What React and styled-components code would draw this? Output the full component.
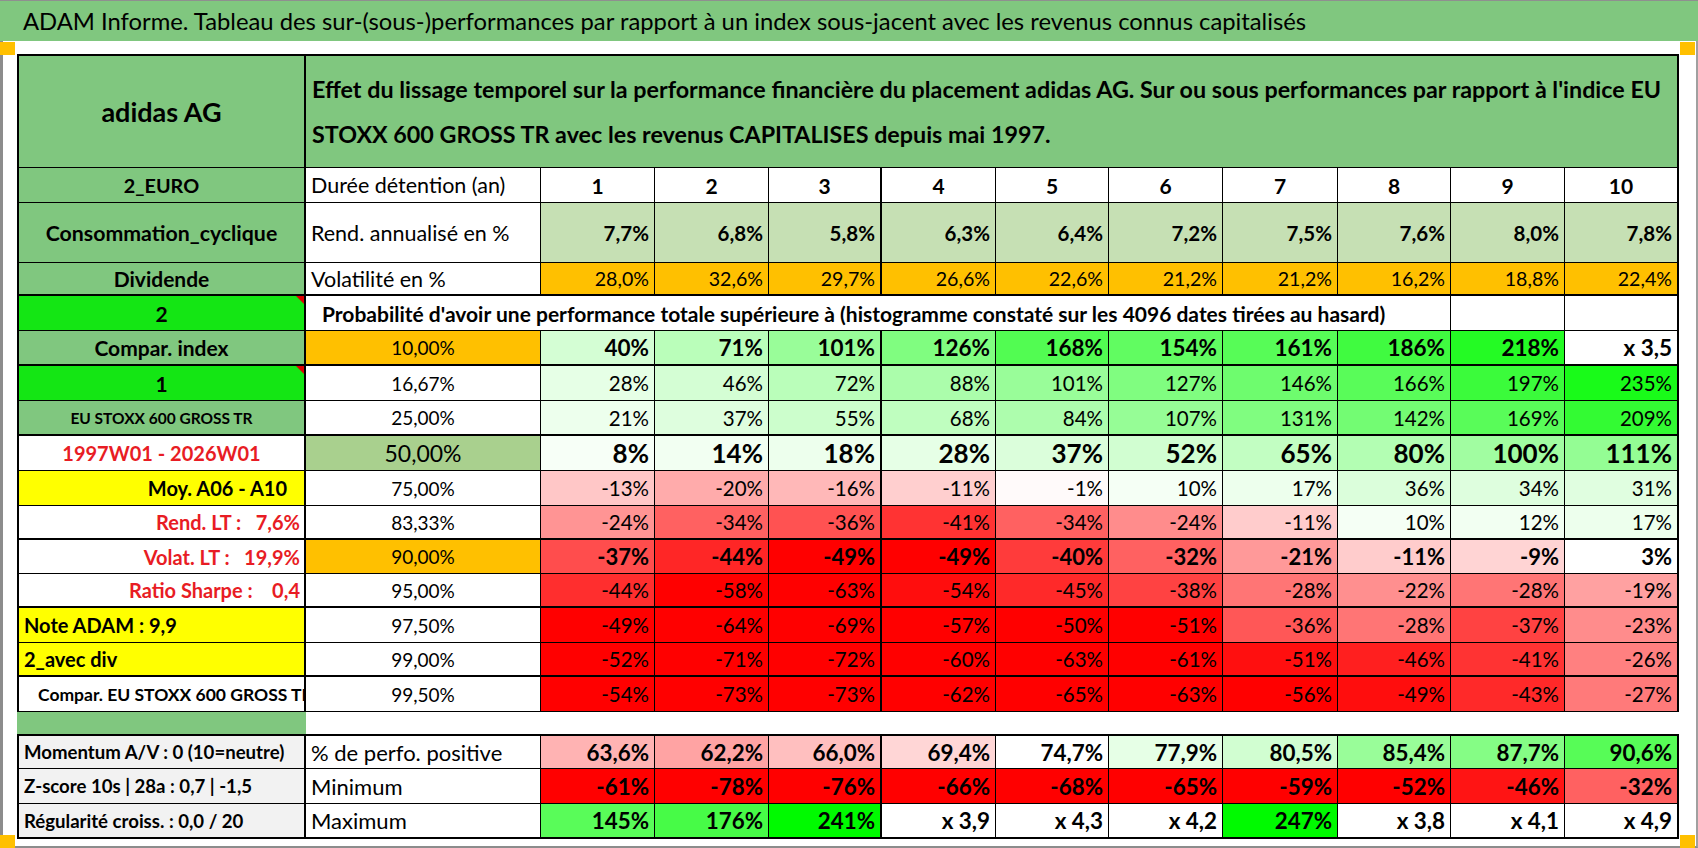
import React from 'react';
import styled, { createGlobalStyle } from 'styled-components';

const GlobalStyle = createGlobalStyle`
  html, body { margin: 0; padding: 0; background: #fff; }
  body { font-family: Lato, "Open Sans", sans-serif; color: #000; }
  * { box-sizing: border-box; }
`;

const GREEN = '#80c77f';
const LIME = '#14e614';
const ORANGE = '#ffc000';
const YELLOW = '#ffff00';
const RED_TEXT = '#e81c24';

// heat colour: t > 0 white -> green, t < 0 white -> red
function heat(t) {
  if (!t) return '#ffffff';
  const a = Math.min(Math.abs(t), 1);
  const c = Math.round(255 * (1 - a));
  if (t > 0) return `rgb(${c}, ${Math.round(255 - a * 5)}, ${c})`;
  return `rgb(255, ${c}, ${c})`;
}

const Page = styled.div`
  position: relative;
  width: 1698px;
  height: 848px;
  display: flex;
  flex-direction: column;
  border-top: 1px solid #8f8f8f;
  background: #fff;
  overflow: hidden;
`;

const TitleBar = styled.div`
  height: 40px;
  flex: none;
  display: flex;
  align-items: center;
  padding-left: 23px;
  background: ${GREEN};
  font-size: 23.8px;
  white-space: nowrap;
`;

const Frame = styled.div`
  flex: 1;
  padding: 13px 0 0 14px;
  border-left: 3px solid #8c8c8c;
  border-right: 2px solid #a0a0a0;
  border-bottom: 2px solid #8c8c8c;
`;

const Sheet = styled.div`
  display: grid;
  grid-template-columns: 289px 235px 114px 114px 113px 114px 113px 114px 115px 113px 114px 114px;
  grid-template-rows: 114px 35px 60px 33px 35px 35px 35px 35px 35px 35px 34px 34px 34px 35px 34px 35px 22px 35px 35px 35px;
`;

const Cell = styled.div`
  position: relative;
  display: flex;
  align-items: center;
  justify-content: ${({ $align }) => ($align === 'left' ? 'flex-start' : $align === 'center' ? 'center' : 'flex-end')};
  padding: ${({ $pad }) => $pad || '0 5px'};
  background: ${({ $bg }) => $bg || '#fff'};
  color: ${({ $color }) => $color || '#000'};
  font-size: ${({ $size }) => $size || 20.5}px;
  font-weight: ${({ $bold }) => ($bold ? 700 : 400)};
  white-space: ${({ $pre }) => ($pre ? 'pre' : 'nowrap')};
  overflow: hidden;
  border-style: solid;
  border-color: #000;
  border-width: ${({ $bt = 0, $br = 1, $bb = 1, $bl = 0 }) => `${$bt}px ${$br}px ${$bb}px ${$bl}px`};
  grid-column: ${({ $span }) => $span || 'auto'};
`;

const HeaderText = styled(Cell)`
  white-space: normal;
  line-height: 45px;
  font-size: 23.3px;
  font-weight: 700;
`;

const Blank = styled.div`
  background: ${({ $bg }) => $bg || '#fff'};
  grid-column: ${({ $span }) => $span || 'auto'};
`;

const CommentMark = styled.span`
  position: absolute;
  top: 0;
  right: 0;
  width: 0;
  height: 0;
  border-top: 8px solid #e00000;
  border-left: 8px solid transparent;
`;

const Handle = styled.span`
  position: absolute;
  width: 15px;
  height: 13px;
  background: #ffc000;
  ${({ $pos }) => $pos};
`;

const years = ['1', '2', '3', '4', '5', '6', '7', '8', '9', '10'];

// rows of the probability table: label cell, col B cell, values, heat levels
const rows = [
  {
    a: { text: 'Compar. index' }, b: { text: '10,00%', bg: ORANGE },
    vals: ['40%', '71%', '101%', '126%', '168%', '154%', '161%', '186%', '218%', 'x 3,5'],
    t: [0.17, 0.27, 0.4, 0.5, 0.68, 0.62, 0.66, 0.75, 0.86, 0], bold: true, size: 22.5, thick: true,
  },
  {
    a: { text: '1', bg: LIME, mark: true }, b: { text: '16,67%' },
    vals: ['28%', '46%', '72%', '88%', '101%', '127%', '146%', '166%', '197%', '235%'],
    t: [0.1, 0.17, 0.27, 0.33, 0.4, 0.5, 0.57, 0.65, 0.77, 0.9],
  },
  {
    a: { text: 'EU STOXX 600 GROSS TR', size: 15.5 }, b: { text: '25,00%' },
    vals: ['21%', '37%', '55%', '68%', '84%', '107%', '131%', '142%', '169%', '209%'],
    t: [0.07, 0.13, 0.2, 0.25, 0.32, 0.41, 0.5, 0.55, 0.65, 0.8], thick: true,
  },
  {
    a: { text: '1997W01 - 2026W01', size: 20, bg: '#fff', color: RED_TEXT }, b: { text: '50,00%', bg: '#a9d08e', size: 23 },
    vals: ['8%', '14%', '18%', '28%', '37%', '52%', '65%', '80%', '100%', '111%'],
    t: [0.03, 0.05, 0.07, 0.1, 0.14, 0.18, 0.24, 0.3, 0.37, 0.42], bold: true, size: 26,
  },
  {
    a: { text: 'Moy. A06 - A10', size: 20, bg: YELLOW, align: 'right', pad: '0 17px 0 4px' }, b: { text: '75,00%' },
    vals: ['-13%', '-20%', '-16%', '-11%', '-1%', '10%', '17%', '36%', '34%', '31%'],
    t: [-0.22, -0.33, -0.28, -0.19, -0.02, 0.04, 0.07, 0.14, 0.13, 0.12],
  },
  {
    a: { text: 'Rend. LT :   7,6%', size: 20, bg: '#fff', color: RED_TEXT, align: 'right', pad: '0 4px' }, b: { text: '83,33%' },
    vals: ['-24%', '-34%', '-36%', '-41%', '-34%', '-24%', '-11%', '10%', '12%', '17%'],
    t: [-0.42, -0.62, -0.68, -0.8, -0.62, -0.45, -0.2, 0.04, 0.05, 0.07], thick: true,
  },
  {
    a: { text: 'Volat. LT :   19,9%', size: 20, bg: '#fff', color: RED_TEXT, align: 'right', pad: '0 4px' }, b: { text: '90,00%', bg: ORANGE },
    vals: ['-37%', '-44%', '-49%', '-49%', '-40%', '-32%', '-21%', '-11%', '-9%', '3%'],
    t: [-0.7, -0.85, -1, -1, -0.77, -0.62, -0.4, -0.2, -0.17, 0], bold: true, size: 22,
  },
  {
    a: { text: 'Ratio Sharpe :    0,4', size: 20, bg: '#fff', color: RED_TEXT, align: 'right', pad: '0 4px' }, b: { text: '95,00%' },
    vals: ['-44%', '-58%', '-63%', '-54%', '-45%', '-38%', '-28%', '-22%', '-28%', '-19%'],
    t: [-0.82, -1, -1, -0.95, -0.84, -0.74, -0.54, -0.44, -0.54, -0.37], thick: true,
  },
  {
    a: { text: 'Note ADAM : 9,9', size: 20, bg: YELLOW, align: 'left' }, b: { text: '97,50%' },
    vals: ['-49%', '-64%', '-69%', '-57%', '-50%', '-51%', '-36%', '-28%', '-37%', '-23%'],
    t: [-1, -1, -1, -1, -1, -1, -0.66, -0.54, -0.74, -0.45],
  },
  {
    a: { text: '2_avec div', size: 20, bg: YELLOW, align: 'left' }, b: { text: '99,00%' },
    vals: ['-52%', '-71%', '-72%', '-60%', '-63%', '-61%', '-51%', '-46%', '-41%', '-26%'],
    t: [-1, -1, -1, -1, -1, -1, -0.94, -0.88, -0.8, -0.5], thick: true,
  },
  {
    a: { text: 'Compar. EU STOXX 600 GROSS TR', size: 17.5, bg: '#fff', align: 'left', pad: '0 0 0 19px' }, b: { text: '99,50%' },
    vals: ['-54%', '-73%', '-73%', '-62%', '-65%', '-63%', '-56%', '-49%', '-43%', '-27%'],
    t: [-1, -1, -1, -1, -1, -1, -1, -0.95, -0.84, -0.52],
  },
];

const summary = [
  {
    a: 'Momentum A/V : 0 (10=neutre)', b: '% de perfo. positive',
    vals: ['63,6%', '62,2%', '66,0%', '69,4%', '74,7%', '77,9%', '80,5%', '85,4%', '87,7%', '90,6%'],
    t: [-0.3, -0.36, -0.25, -0.16, 0, 0.1, 0.18, 0.4, 0.48, 0.66],
  },
  {
    a: 'Z-score 10s | 28a : 0,7 | -1,5', b: 'Minimum',
    vals: ['-61%', '-78%', '-76%', '-66%', '-68%', '-65%', '-59%', '-52%', '-46%', '-32%'],
    t: [-1, -1, -1, -1, -1, -1, -1, -1, -0.92, -0.62],
  },
  {
    a: 'Régularité croiss. : 0,0 / 20', b: 'Maximum',
    vals: ['145%', '176%', '241%', 'x 3,9', 'x 4,3', 'x 4,2', '247%', 'x 3,8', 'x 4,1', 'x 4,9'],
    t: [0.65, 0.72, 1, 0, 0, 0, 1, 0, 0, 0],
  },
];

const rightWidth = (i) => (i === 2 || i === 9 ? 2 : 1);

function ValueCells({ vals, bgs, bold, size, bb = 1, bt = 0, align }) {
  return vals.map((v, i) => (
    <Cell key={i} $bg={bgs[i]} $bold={bold} $size={size} $bb={bb} $bt={bt} $br={rightWidth(i)} $align={align}>
      {v}
    </Cell>
  ));
}

export default function App() {
  return (
    <>
      <GlobalStyle />
      <Page>
        <TitleBar>
          ADAM Informe. Tableau des sur-(sous-)performances par rapport à un index sous-jacent avec les revenus connus capitalisés
        </TitleBar>
        <Frame>
          <Sheet>
            <Cell $bg={GREEN} $align="center" $bold $size={27} $bt={2} $bl={2} $br={2}>adidas AG</Cell>
            <HeaderText $bg={GREEN} $align="left" $pad="0 6px" $bt={2} $br={2} $span="2 / -1">
              Effet du lissage temporel sur la performance financière du placement adidas AG. Sur ou sous performances par rapport à l'indice EU STOXX 600 GROSS TR avec les revenus CAPITALISES depuis mai 1997.
            </HeaderText>

            <Cell $bg={GREEN} $align="center" $bold $size={19.8} $bl={2} $br={2}>2_EURO</Cell>
            <Cell $align="left" $size={21.5}>Durée détention (an)</Cell>
            <ValueCells vals={years} bgs={years.map(() => '#fff')} bold size={21} align="center" />

            <Cell $bg={GREEN} $align="center" $bold $size={21.3} $bl={2} $br={2}>Consommation_cyclique</Cell>
            <Cell $align="left" $size={21.5}>Rend. annualisé en %</Cell>
            <ValueCells
              vals={['7,7%', '6,8%', '5,8%', '6,3%', '6,4%', '7,2%', '7,5%', '7,6%', '8,0%', '7,8%']}
              bgs={years.map(() => '#c6e0b4')} bold size={20.5}
            />

            <Cell $bg={GREEN} $align="center" $bold $size={21} $bl={2} $br={2} $bb={2}>Dividende</Cell>
            <Cell $align="left" $size={21.5} $bb={2}>Volatilité en %</Cell>
            <ValueCells
              vals={['28,0%', '32,6%', '29,7%', '26,6%', '22,6%', '21,2%', '21,2%', '16,2%', '18,8%', '22,4%']}
              bgs={years.map(() => ORANGE)} size={19.6} bb={2}
            />

            <Cell $bg={LIME} $align="center" $bold $size={21} $bl={2} $br={2}>
              2
              <CommentMark />
            </Cell>
            <Cell $align="left" $bold $size={21} $pad="0 16px" $span="2 / 11">
              Probabilité d'avoir une performance totale supérieure à (histogramme constaté sur les 4096 dates tirées au hasard)
            </Cell>
            <Cell />
            <Cell $br={2} />

            {rows.map((r, ri) => (
              <React.Fragment key={ri}>
                <Cell
                  $bg={r.a.bg || GREEN}
                  $color={r.a.color}
                  $align={r.a.align || 'center'}
                  $pad={r.a.pad}
                  $bold
                  $pre
                  $size={r.a.size || 21}
                  $bl={2}
                  $br={2}
                  $bb={r.thick ? 2 : 1}
                >
                  {r.a.text}
                  {r.a.mark && <CommentMark />}
                </Cell>
                <Cell $bg={r.b.bg} $align="center" $size={r.b.size || 19} $bb={r.thick ? 2 : 1}>
                  {r.b.text}
                </Cell>
                <ValueCells
                  vals={r.vals}
                  bgs={r.t.map(heat)}
                  bold={r.bold}
                  size={r.size || 20.5}
                  bb={r.thick ? 2 : 1}
                />
              </React.Fragment>
            ))}

            <Blank $bg={GREEN} />
            <Blank $span="2 / -1" />

            {summary.map((r, ri) => (
              <React.Fragment key={ri}>
                <Cell $bg="#f2f2f2" $align="left" $bold $size={18.6} $bl={2} $br={2} $bt={ri === 0 ? 2 : 0} $bb={ri === 2 ? 2 : 1}>
                  {r.a}
                </Cell>
                <Cell $align="left" $size={22} $bt={ri === 0 ? 2 : 0} $bb={ri === 2 ? 2 : 1}>
                  {r.b}
                </Cell>
                <ValueCells
                  vals={r.vals}
                  bgs={r.t.map(heat)}
                  bold
                  size={22.4}
                  bt={ri === 0 ? 2 : 0}
                  bb={ri === 2 ? 2 : 1}
                />
              </React.Fragment>
            ))}
          </Sheet>
        </Frame>
        <Handle $pos="left: 0; top: 41px;" />
        <Handle $pos="left: 1680px; top: 41px;" />
        <Handle $pos="left: 0; bottom: 0;" />
        <Handle $pos="left: 1680px; bottom: 0;" />
      </Page>
    </>
  );
}
